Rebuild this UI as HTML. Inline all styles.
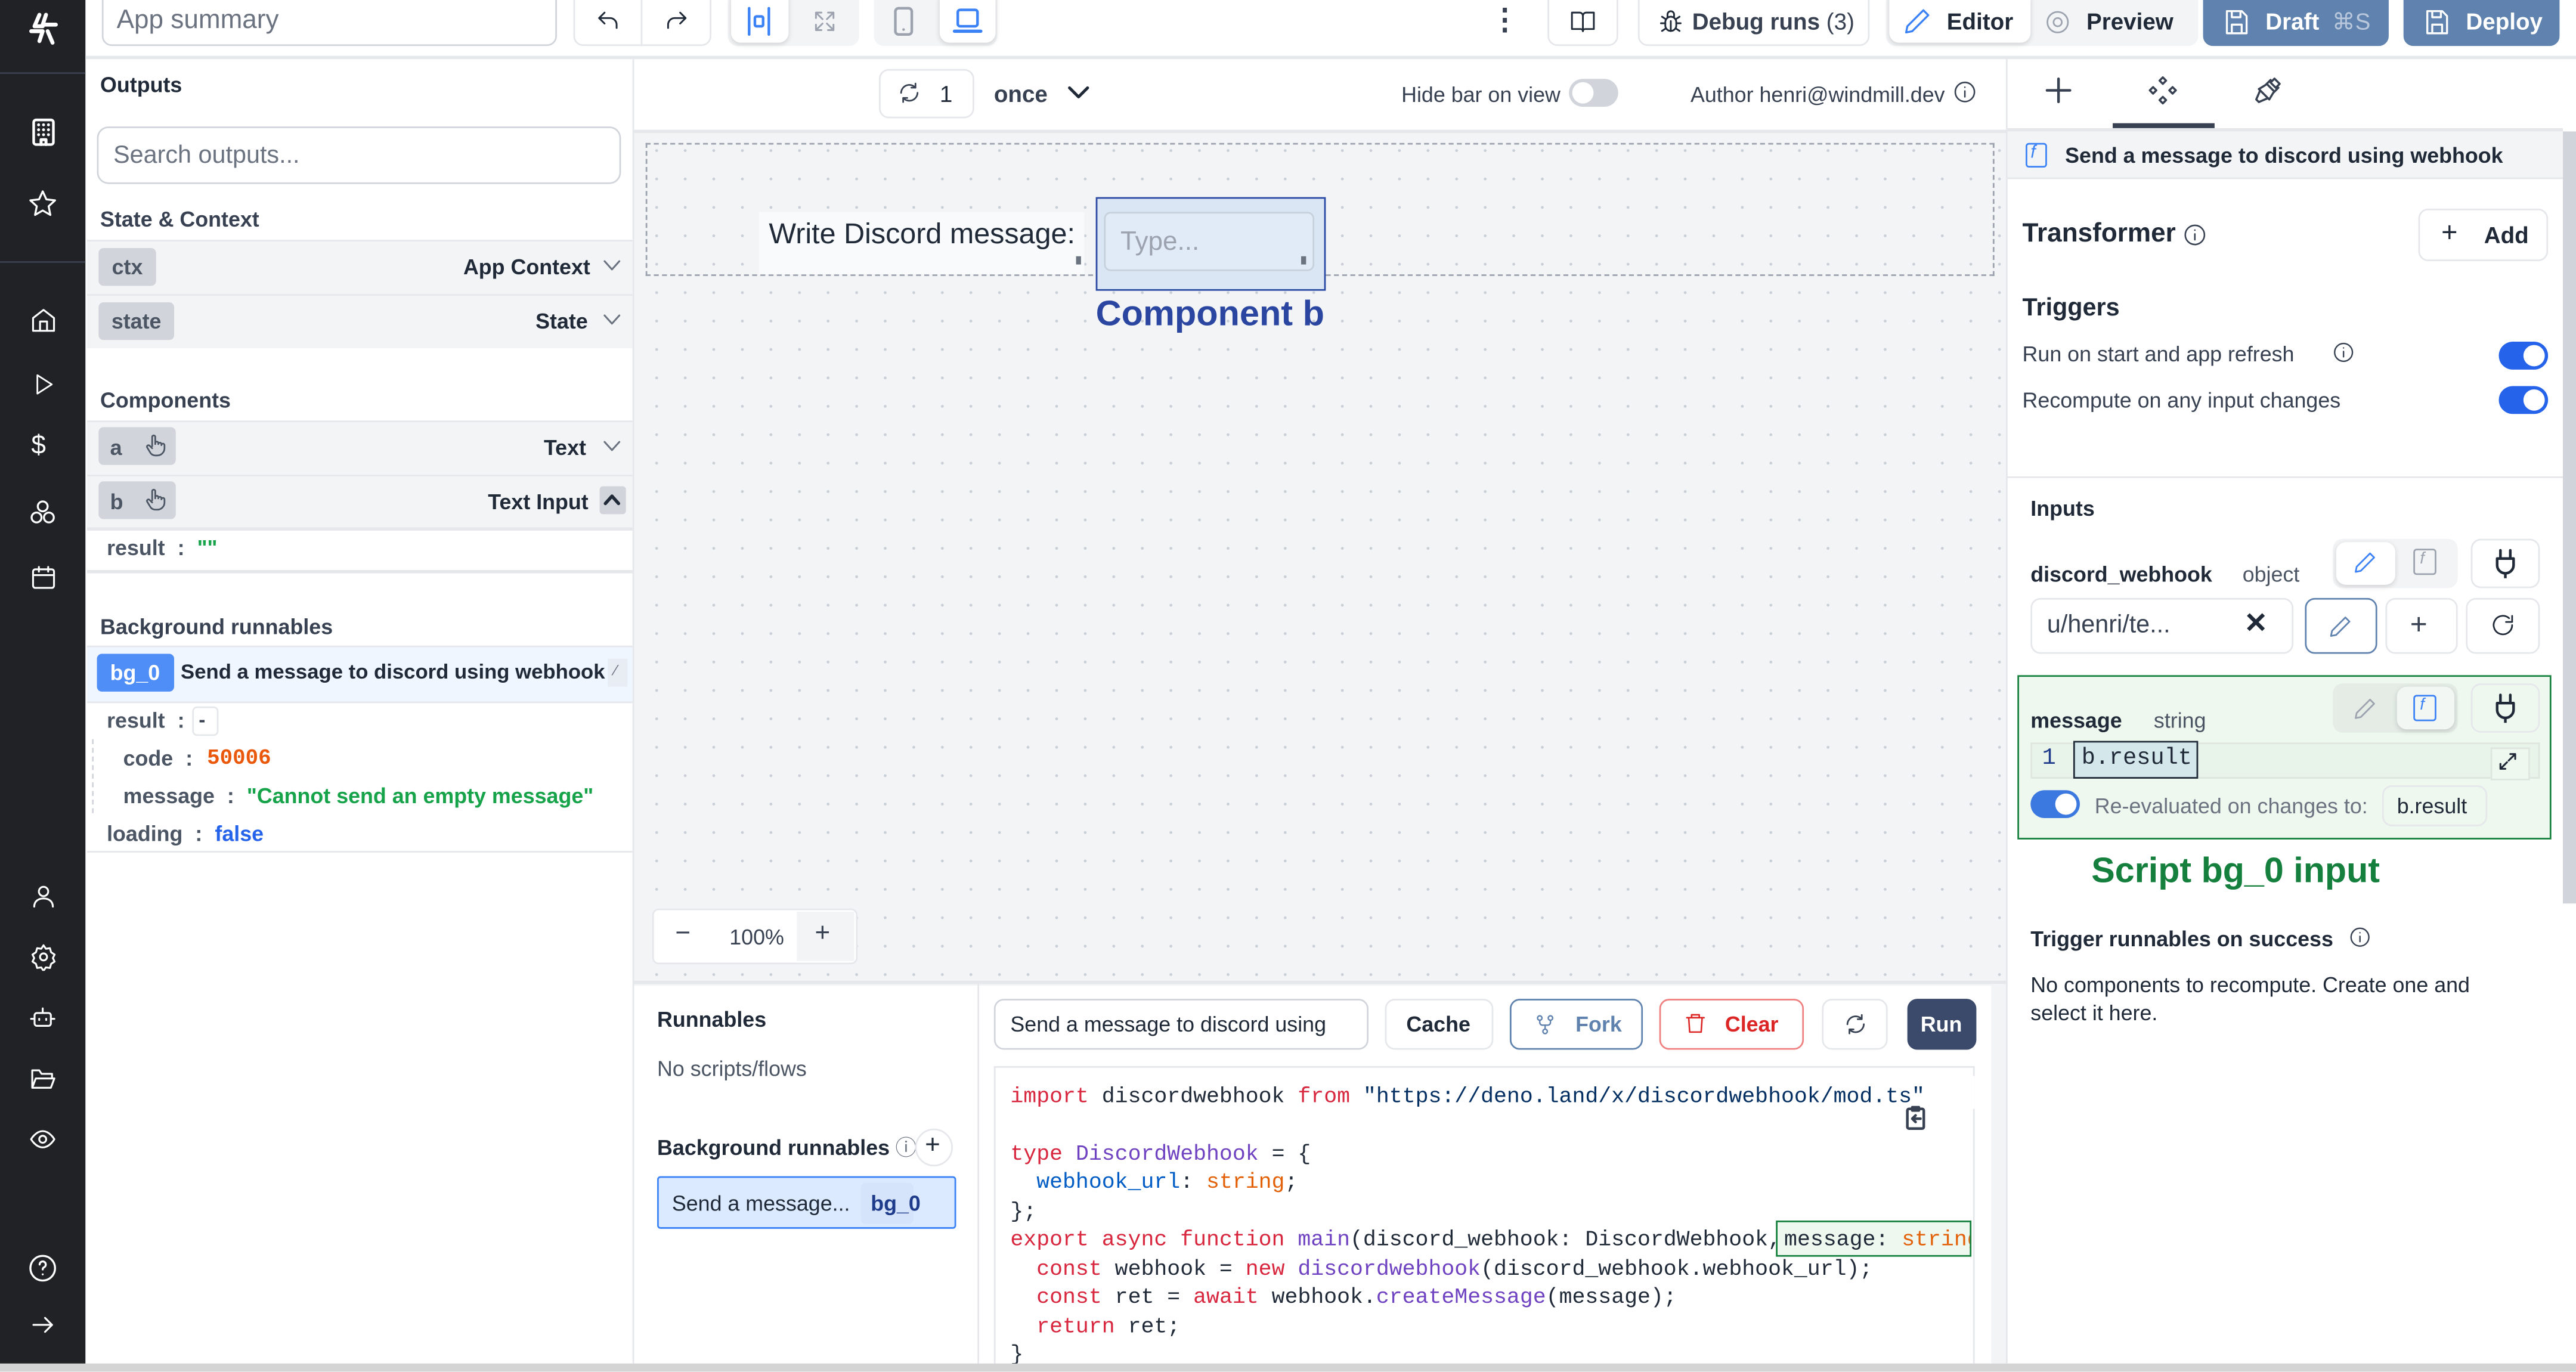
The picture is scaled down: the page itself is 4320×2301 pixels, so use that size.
<!DOCTYPE html>
<html><head><meta charset="utf-8">
<style>
html,body{margin:0;padding:0;width:4320px;height:2301px;overflow:hidden;background:#fff}
#r{position:absolute;left:0;top:0;width:1568px;height:835.2px;transform:scale(2.75510);transform-origin:0 0;font-family:"Liberation Sans",sans-serif;color:#1f2937;overflow:hidden;background:#fff}
.a{position:absolute}
.t{position:absolute;white-space:nowrap;line-height:1}
.b{font-weight:bold}
svg{position:absolute;fill:none;stroke:currentColor;stroke-width:1.6;stroke-linecap:round;stroke-linejoin:round}
.btn{position:absolute;border:1px solid #e5e7eb;border-radius:6px;background:#fff;box-sizing:border-box}
.row{position:absolute;left:53px;width:332px;background:#f3f4f6;border-top:1px solid #e5e7eb}
.pill{position:absolute;background:#d1d5db;border-radius:3px;color:#4b5563;font-weight:bold;font-size:13px}
.mono{font-family:"Liberation Mono",monospace}
.code{position:absolute;left:615px;font-family:"Liberation Mono",monospace;font-size:13.25px;white-space:pre;line-height:1;color:#1f2937}
.kw{color:#d7263d}.ty{color:#6f42c1}.st{color:#032f62}.or{color:#e36209}.bl{color:#005cc5}
.tg{position:absolute;width:30px;height:17px;border-radius:9px;background:#2563eb}
.tg::after{content:"";position:absolute;right:2px;top:2px;width:13px;height:13px;border-radius:50%;background:#fff}
</style></head><body><div id="r">

<!-- left sidebar -->
<div class="a" style="left:0;top:0;width:52px;height:835px;background:#202226"></div>
<div class="a" style="left:0;top:44px;width:52px;height:1px;background:#3a4050"></div>
<div class="a" style="left:0;top:159px;width:52px;height:1px;background:#3a4050"></div>
<svg style="left:15px;top:7px;color:#fff" width="22" height="22" viewBox="0 0 22 22"><path d="M9 2 L6 9 L11 9 M13 2 L11 8 L19 8 M4 12 L11 12 L9 18 M14 12 L17 19" stroke-width="2.4"/></svg>
<svg style="left:19px;top:72px;color:#fff" width="15" height="17" viewBox="0 0 15 17"><rect x="1.5" y="1" width="12" height="15" rx="1.5"/><path d="M4.5 4h0M7.5 4h0M10.5 4h0M4.5 7h0M7.5 7h0M10.5 7h0M4.5 10h0M7.5 10h0M10.5 10h0M6 16v-3h3v3" stroke-width="1.8"/></svg>
<svg style="left:17px;top:115px;color:#fff" width="18" height="18" viewBox="0 0 24 24"><path d="M12 2l3 6.5 7 .8-5.2 4.8 1.4 7-6.2-3.6-6.2 3.6 1.4-7L2 9.3l7-.8z"/></svg>
<svg style="left:18px;top:186px;color:#fff" width="17" height="18" viewBox="0 0 24 24"><path d="M3 10l9-7 9 7v11H3z M9 21v-8h6v8"/></svg>
<svg style="left:19px;top:226px;color:#fff" width="15" height="16" viewBox="0 0 24 24"><path d="M6 3l14 9-14 9z"/></svg>
<div class="t" style="left:19px;top:264px;color:#fff;font-size:16px">$</div>
<svg style="left:17px;top:303px;color:#fff" width="18" height="18" viewBox="0 0 24 24"><circle cx="12" cy="7" r="4"/><circle cx="7" cy="16" r="4"/><circle cx="17" cy="16" r="4"/></svg>
<svg style="left:18px;top:343px;color:#fff" width="17" height="17" viewBox="0 0 24 24"><rect x="3" y="5" width="18" height="16" rx="2"/><path d="M3 10h18M8 3v4M16 3v4"/></svg>
<svg style="left:18px;top:537px;color:#fff" width="17" height="17" viewBox="0 0 24 24"><circle cx="12" cy="8" r="4"/><path d="M4 21c0-5 4-7 8-7s8 2 8 7"/></svg>
<svg style="left:18px;top:574px;color:#fff" width="17" height="17" viewBox="0 0 24 24"><path d="M12 2l2 3 3.5-.5 1 3.5 3 2-1.5 3 1.5 3-3 2-1 3.5L14 21l-2 3-2-3-3.5.5-1-3.5-3-2 1.5-3L2.5 10l3-2 1-3.5L10 5z"/><circle cx="12" cy="12" r="3"/></svg>
<svg style="left:17px;top:611px;color:#fff" width="18" height="17" viewBox="0 0 24 24"><rect x="5" y="8" width="14" height="11" rx="2"/><path d="M12 8V4M2 13h3M19 13h3M9 13v1M15 13v1"/></svg>
<svg style="left:17px;top:648px;color:#fff" width="18" height="17" viewBox="0 0 24 24"><path d="M3 20V5h6l2 3h9v3M3 20l3-8h16l-3 8z"/></svg>
<svg style="left:17px;top:685px;color:#fff" width="18" height="17" viewBox="0 0 24 24"><path d="M2 12s4-7 10-7 10 7 10 7-4 7-10 7S2 12 2 12z"/><circle cx="12" cy="12" r="3"/></svg>
<svg style="left:17px;top:763px;color:#fff" width="18" height="18" viewBox="0 0 24 24"><circle cx="12" cy="12" r="10"/><path d="M9.5 9a2.5 2.5 0 1 1 3.5 2.3c-.7.4-1 1-1 1.7M12 17h0"/></svg>
<svg style="left:17px;top:798px;color:#fff" width="18" height="17" viewBox="0 0 24 24"><path d="M4 12h16M14 6l6 6-6 6"/></svg>

<!-- top bar -->
<div class="a" style="left:52px;top:34px;width:1516px;height:2px;background:#e5e7eb"></div>
<div class="btn" style="left:62px;top:-6px;width:277px;height:34px;border-color:#d1d5db"></div>
<div class="t" style="left:71px;top:5px;font-size:16px;color:#6b7280">App summary</div>
<div class="btn" style="left:349px;top:-6px;width:84px;height:34px"></div>
<div class="a" style="left:390px;top:0;width:1px;height:28px;background:#e5e7eb"></div>
<svg style="left:362px;top:5px;color:#1f2937" width="16" height="16" viewBox="0 0 24 24"><path d="M9 14L4 9l5-5M4 9h10a6 6 0 0 1 6 6v3"/></svg>
<svg style="left:404px;top:5px;color:#1f2937" width="16" height="16" viewBox="0 0 24 24"><path d="M15 14l5-5-5-5M20 9H10a6 6 0 0 0-6 6v3"/></svg>
<div class="a" style="left:443px;top:-6px;width:80px;height:34px;background:#f3f4f6;border-radius:6px"></div>
<div class="btn" style="left:445px;top:-6px;width:35px;height:32px;border:none;box-shadow:0 1px 3px rgba(0,0,0,.15)"></div>
<svg style="left:454px;top:4px;color:#3b82f6" width="16" height="18" viewBox="0 0 16 18"><path d="M2 1v16M14 1v16"/><rect x="5.5" y="6" width="5" height="6" rx="1"/></svg>
<svg style="left:494px;top:5px;color:#9ca3af" width="16" height="16" viewBox="0 0 24 24"><path d="M4 9V4h5M20 9V4h-5M4 15v5h5M20 15v5h-5M4 4l6 6M20 4l-6 6M4 20l6-6M20 20l-6-6"/></svg>
<div class="a" style="left:532px;top:-6px;width:75px;height:34px;background:#f3f4f6;border-radius:6px"></div>
<div class="btn" style="left:572px;top:-6px;width:34px;height:32px;border:none;box-shadow:0 1px 3px rgba(0,0,0,.15)"></div>
<svg style="left:543px;top:4px;color:#9ca3af" width="14" height="18" viewBox="0 0 14 18"><rect x="2" y="1" width="10" height="16" rx="2"/><path d="M7 14h0"/></svg>
<svg style="left:580px;top:4px;color:#3b82f6" width="18" height="18" viewBox="0 0 18 18"><rect x="3" y="2" width="12" height="10" rx="1.5"/><path d="M1 15h16" stroke-width="2"/></svg>
<div class="t b" style="left:907px;top:3px;font-size:18px;color:#374151">⋮</div>
<div class="btn" style="left:942px;top:-6px;width:43px;height:34px"></div>
<svg style="left:955px;top:5px;color:#1f2937" width="17" height="16" viewBox="0 0 24 24"><path d="M2 4h7a3 3 0 0 1 3 3v14a2 2 0 0 0-2-2H2zM22 4h-7a3 3 0 0 0-3 3v14a2 2 0 0 1 2-2h8z"/></svg>
<div class="btn" style="left:997px;top:-6px;width:141px;height:34px"></div>
<svg style="left:1009px;top:5px;color:#1f2937" width="16" height="17" viewBox="0 0 24 24"><rect x="7" y="7" width="10" height="13" rx="5"/><path d="M9 7V5a3 3 0 0 1 6 0v2M3 13h4M17 13h4M4 7l3 2M20 7l-3 2M4 20l3-2M20 20l-3-2M12 11v9"/></svg>
<div class="t b" style="left:1030px;top:6px;font-size:14px;color:#374151">Debug runs <span style="font-weight:normal">(3)</span></div>
<div class="a" style="left:1148px;top:-6px;width:190px;height:34px;background:#f3f4f6;border-radius:6px"></div>
<div class="btn" style="left:1150px;top:-6px;width:86px;height:32px;border:none;box-shadow:0 1px 3px rgba(0,0,0,.15)"></div>
<svg style="left:1158px;top:4px;color:#3b82f6" width="18" height="18" viewBox="0 0 24 24"><path d="M17 3l4 4L8 20l-5 1 1-5z"/></svg>
<div class="t b" style="left:1185px;top:6px;font-size:14px;color:#1f2937">Editor</div>
<svg style="left:1245px;top:6px;color:#9ca3af" width="15" height="15" viewBox="0 0 24 24"><circle cx="12" cy="12" r="10"/><circle cx="12" cy="12" r="4"/></svg>
<div class="t b" style="left:1270px;top:6px;font-size:14px;color:#1f2937">Preview</div>
<div class="a" style="left:1341px;top:-6px;width:113px;height:34px;background:#5f82ae;border-radius:6px"></div>
<svg style="left:1354px;top:5px;color:#fff" width="15" height="17" viewBox="0 0 20 22"><path d="M2 2h12l4 4v14H2z M6 2v5h7V2 M6 20v-7h8v7"/></svg>
<div class="t b" style="left:1379px;top:6px;font-size:14px;color:#fff">Draft <span style="color:#b8c7dc;font-weight:normal;margin-left:4px">⌘S</span></div>
<div class="a" style="left:1463px;top:-6px;width:95px;height:34px;background:#5f82ae;border-radius:6px"></div>
<svg style="left:1476px;top:5px;color:#fff" width="15" height="17" viewBox="0 0 20 22"><path d="M2 2h12l4 4v14H2z M6 2v5h7V2 M6 20v-7h8v7"/></svg>
<div class="t b" style="left:1501px;top:6px;font-size:14px;color:#fff">Deploy</div>

<!-- left panel -->
<div class="a" style="left:385px;top:36px;width:1px;height:794px;background:#e5e7eb"></div>
<div class="t b" style="left:61px;top:45px;font-size:13px;color:#1f2937">Outputs</div>
<div class="btn" style="left:59px;top:77px;width:319px;height:35px;border-color:#d1d5db;border-radius:7px"></div>
<div class="t" style="left:69px;top:87px;font-size:15px;color:#6b7280">Search outputs...</div>
<div class="t b" style="left:61px;top:127px;font-size:13px;color:#374151">State &amp; Context</div>
<div class="row" style="top:146px;height:32px"></div>
<div class="pill" style="left:60px;top:151px;width:35px;height:23px;line-height:23px;text-align:center">ctx</div>
<div class="t b" style="left:282px;top:156px;font-size:13px">App Context</div>
<svg style="left:367px;top:158px;color:#6b7280" width="11" height="8" viewBox="0 0 11 8"><path d="M1 1l4.5 5L10 1" stroke-width="1.1"/></svg>
<div class="row" style="top:179px;height:32px"></div>
<div class="pill" style="left:60px;top:184px;width:46px;height:23px;line-height:23px;text-align:center">state</div>
<div class="t b" style="left:326px;top:189px;font-size:13px">State</div>
<svg style="left:367px;top:191px;color:#6b7280" width="11" height="8" viewBox="0 0 11 8"><path d="M1 1l4.5 5L10 1" stroke-width="1.1"/></svg>
<div class="t b" style="left:61px;top:237px;font-size:13px;color:#374151">Components</div>
<div class="row" style="top:256px;height:32px"></div>
<div class="pill" style="left:60px;top:260px;width:47px;height:23px"></div>
<div class="t b" style="left:67px;top:266px;font-size:13px;color:#4b5563">a</div>
<svg style="left:87px;top:263px;color:#4b5563" width="15" height="16" viewBox="0 0 24 24" stroke-width="1.5"><path d="M9 13V4a1.5 1.5 0 0 1 3 0v7M12 10a1.5 1.5 0 0 1 3 0v1M15 11a1.5 1.5 0 0 1 3 0v1M18 12a1.5 1.5 0 0 1 3 0v3a7 7 0 0 1-7 7h-2a6 6 0 0 1-5-3l-3-5a1.5 1.5 0 0 1 2.5-1.5L9 15"/></svg>
<div class="t b" style="left:331px;top:266px;font-size:13px">Text</div>
<svg style="left:367px;top:268px;color:#6b7280" width="11" height="8" viewBox="0 0 11 8"><path d="M1 1l4.5 5L10 1" stroke-width="1.1"/></svg>
<div class="row" style="top:289px;height:32px"></div>
<div class="pill" style="left:60px;top:293px;width:47px;height:23px"></div>
<div class="t b" style="left:67px;top:299px;font-size:13px;color:#4b5563">b</div>
<svg style="left:87px;top:296px;color:#4b5563" width="15" height="16" viewBox="0 0 24 24" stroke-width="1.5"><path d="M9 13V4a1.5 1.5 0 0 1 3 0v7M12 10a1.5 1.5 0 0 1 3 0v1M15 11a1.5 1.5 0 0 1 3 0v1M18 12a1.5 1.5 0 0 1 3 0v3a7 7 0 0 1-7 7h-2a6 6 0 0 1-5-3l-3-5a1.5 1.5 0 0 1 2.5-1.5L9 15"/></svg>
<div class="t b" style="left:297px;top:299px;font-size:13px">Text Input</div>
<div class="a" style="left:365px;top:296px;width:16px;height:17px;background:#d1d5db;border-radius:2px"></div>
<svg style="left:367px;top:300px;color:#1f2937" width="11" height="8" viewBox="0 0 11 8"><path d="M1.5 6.5l4-4.5 4 4.5" stroke-width="2"/></svg>
<div class="a" style="left:53px;top:321px;width:332px;height:2px;background:#e5e7eb"></div>
<div class="t b" style="left:65px;top:327px;font-size:13px;color:#4b5563">result <span style="margin-left:4px">:</span> <span style="color:#16a34a;margin-left:4px">""</span></div>
<div class="a" style="left:53px;top:347px;width:332px;height:2px;background:#e5e7eb"></div>
<div class="t b" style="left:61px;top:375px;font-size:13px;color:#374151">Background runnables</div>
<div class="a" style="left:53px;top:393px;width:332px;height:33px;background:#eff6ff;border-top:1px solid #e5e7eb;border-bottom:1px solid #e5e7eb"></div>
<div class="a" style="left:59px;top:398px;width:47px;height:23px;background:#4f8ef7;border-radius:3px"></div>
<div class="t b" style="left:67px;top:403px;font-size:13px;color:#fff">bg_0</div>
<div class="t b" style="left:110px;top:403px;font-size:12.6px">Send a message to discord using webhook</div>
<div class="a" style="left:370px;top:401px;width:12px;height:17px;background:#e8edf3"></div>
<div class="t" style="left:374px;top:404px;font-size:9px;color:#6b7280">⁄</div>
<div class="t b" style="left:65px;top:432px;font-size:13px;color:#4b5563">result <span style="margin-left:4px">:</span></div>
<div class="btn" style="left:117px;top:430px;width:16px;height:18px;border-radius:3px"></div>
<div class="t b" style="left:121px;top:432px;font-size:12px;color:#374151">-</div>
<div class="a" style="left:56px;top:450px;width:0;height:45px;border-left:1px dashed #d1d5db"></div>
<div class="t b" style="left:75px;top:455px;font-size:13px;color:#4b5563">code <span style="margin-left:4px">:</span></div>
<div class="t b mono" style="left:126px;top:455px;font-size:13px;color:#ea580c">50006</div>
<div class="t b" style="left:75px;top:478px;font-size:13px;color:#4b5563">message <span style="margin-left:4px">:</span> <span style="color:#16a34a;margin-left:4px">"Cannot send an empty message"</span></div>
<div class="t b" style="left:65px;top:501px;font-size:13px;color:#4b5563">loading <span style="margin-left:4px">:</span> <span style="color:#2563eb;margin-left:4px">false</span></div>
<div class="a" style="left:53px;top:518px;width:332px;height:1px;background:#e5e7eb"></div>

<!-- center -->
<div class="a" style="left:386px;top:79px;width:836px;height:519px;background-color:#f3f4f6;background-image:radial-gradient(circle,#c8ced6 0.7px,transparent 1px);background-size:17.4px 17.3px;background-position:5px 2px;border-top:2px solid #e5e7eb"></div>
<div class="btn" style="left:535px;top:42px;width:58px;height:30px"></div>
<svg style="left:546px;top:49px;color:#374151" width="15" height="15" viewBox="0 0 24 24"><path d="M20 12a8 8 0 0 1-14 5M4 12a8 8 0 0 1 14-5M18 3v4h-4M6 21v-4h4"/></svg>
<div class="t" style="left:572px;top:50px;font-size:14px;color:#1f2937">1</div>
<div class="t b" style="left:605px;top:50px;font-size:14px;color:#374151">once</div>
<svg style="left:650px;top:52px;color:#1f2937" width="13" height="9" viewBox="0 0 13 9"><path d="M1 1.5l5.5 5.5L12 1.5" stroke-width="1.8"/></svg>
<div class="t" style="left:853px;top:51px;font-size:13px;color:#374151">Hide bar on view</div>
<div class="a" style="left:955px;top:48px;width:30px;height:17px;border-radius:9px;background:#d1d5db"></div>
<div class="a" style="left:957px;top:50px;width:13px;height:13px;border-radius:50%;background:#fff"></div>
<div class="t" style="left:1029px;top:51px;font-size:13px;color:#374151">Author henri@windmill.dev</div>
<svg style="left:1189px;top:49px;color:#374151" width="14" height="14" viewBox="0 0 24 24"><circle cx="12" cy="12" r="10"/><path d="M12 11v6M12 7h0"/></svg>
<div class="a" style="left:393px;top:87px;width:821px;height:81px;border:1px dashed #9ca3af;box-sizing:border-box"></div>
<div class="a" style="left:462px;top:129px;width:198px;height:38px;background:#f9fafb"></div>
<div class="t" style="left:468px;top:134px;font-size:17.6px;color:#1f2937">Write Discord message:</div>
<div class="a" style="left:655px;top:156px;width:3px;height:5px;background:#6b7280"></div>
<div class="a" style="left:667px;top:120px;width:140px;height:57px;background:#dbe6f4;border:1.5px solid #2a4aa3;box-sizing:border-box"></div>
<div class="a" style="left:672px;top:129px;width:128px;height:36px;border:1.5px solid #c7d1de;border-radius:4px;background:#e1ebf7;box-sizing:border-box"></div>
<div class="t" style="left:682px;top:140px;font-size:16px;color:#9ca3af">Type...</div>
<div class="a" style="left:792px;top:156px;width:3px;height:5px;background:#6b7280"></div>
<div class="t b" style="left:667px;top:180px;font-size:21.6px;color:#2a46a0">Component b</div>
<div class="btn" style="left:397px;top:553px;width:125px;height:34px;border-radius:4px"></div>
<div class="t" style="left:411px;top:561px;font-size:16px;color:#374151">−</div>
<div class="t" style="left:444px;top:564px;font-size:13px;color:#374151">100%</div>
<div class="a" style="left:485px;top:555px;width:35px;height:30px;background:#f3f4f6"></div>
<div class="t" style="left:496px;top:561px;font-size:16px;color:#374151">+</div>

<!-- bottom panel -->
<div class="a" style="left:386px;top:597px;width:836px;height:2px;background:#e5e7eb"></div>
<div class="a" style="left:595px;top:599px;width:1px;height:231px;background:#e5e7eb"></div>
<div class="a" style="left:1212px;top:599px;width:10px;height:231px;background:#f3f4f6"></div>
<div class="t b" style="left:400px;top:614px;font-size:13px">Runnables</div>
<div class="t" style="left:400px;top:644px;font-size:13px;color:#4b5563">No scripts/flows</div>
<div class="t b" style="left:400px;top:692px;font-size:13px">Background runnables</div>
<div class="t" style="left:545px;top:692px;font-size:13px;color:#6b7280">ⓘ</div>
<div class="a" style="left:557px;top:687px;width:23px;height:23px;border-radius:50%;background:#fff;border:1px solid #e5e7eb;box-sizing:border-box"></div>
<div class="t" style="left:563px;top:690px;font-size:16px;color:#1f2937">+</div>
<div class="a" style="left:400px;top:716px;width:182px;height:32px;background:#dbeafe;border:1.5px solid #3b82f6;border-radius:2px;box-sizing:border-box"></div>
<div class="t" style="left:409px;top:726px;font-size:13px;color:#1f2937">Send a message...</div>
<div class="a" style="left:524px;top:720px;width:32px;height:25px;background:#d5e3fb;border-radius:3px"></div>
<div class="t b" style="left:530px;top:726px;font-size:13px;color:#1e3a8a">bg_0</div>
<div class="btn" style="left:605px;top:608px;width:228px;height:31px;border-color:#d1d5db"></div>
<div class="t" style="left:615px;top:617px;font-size:13px;color:#1f2937">Send a message to discord using</div>
<div class="btn" style="left:843px;top:608px;width:66px;height:31px"></div>
<div class="t b" style="left:856px;top:617px;font-size:13px">Cache</div>
<div class="btn" style="left:919px;top:608px;width:81px;height:31px;border-color:#5f82ae"></div>
<svg style="left:934px;top:616px;color:#5f82ae" width="13" height="15" viewBox="0 0 24 24"><circle cx="6" cy="5" r="2.5"/><circle cx="18" cy="5" r="2.5"/><circle cx="12" cy="20" r="2.5"/><path d="M6 8v2a3 3 0 0 0 3 3h6a3 3 0 0 0 3-3V8M12 13v4"/></svg>
<div class="t b" style="left:959px;top:617px;font-size:13px;color:#5f82ae">Fork</div>
<div class="btn" style="left:1010px;top:608px;width:88px;height:31px;border-color:#f08080"></div>
<svg style="left:1025px;top:615px;color:#dc2626" width="14" height="16" viewBox="0 0 24 24"><path d="M3 6h18M8 6V3h8v3M5 6l1 15h12l1-15"/></svg>
<div class="t b" style="left:1050px;top:617px;font-size:13px;color:#dc2626">Clear</div>
<div class="btn" style="left:1109px;top:608px;width:40px;height:31px"></div>
<svg style="left:1122px;top:616px;color:#374151" width="15" height="15" viewBox="0 0 24 24"><path d="M20 12a8 8 0 0 1-14 5M4 12a8 8 0 0 1 14-5M18 3v4h-4M6 21v-4h4"/></svg>
<div class="a" style="left:1161px;top:608px;width:42px;height:31px;background:#3b4a6b;border-radius:6px"></div>
<div class="t b" style="left:1169px;top:617px;font-size:13px;color:#fff">Run</div>
<div class="a" style="left:605px;top:649px;width:597px;height:181px;border:1px solid #e5e7eb;border-bottom:none;box-sizing:border-box"></div>
<div class="code" style="top:661px"><span class="kw">import</span> discordwebhook <span class="kw">from</span> <span class="st">"https://deno.land/x/discordwebhook/mod.ts"</span>;</div>
<div class="a" style="left:1174px;top:655px;width:28px;height:20px;background:#fff"></div>
<svg style="left:1160px;top:673px;color:#374151" width="12" height="15" viewBox="0 0 12 15"><rect x="1" y="2" width="10" height="12" rx="1"/><path d="M4 1h4v2H4zM9 8H4l2-2M4 8l2 2"/></svg>
<div class="code" style="top:696px"><span class="kw">type</span> <span class="ty">DiscordWebhook</span> = {</div>
<div class="code" style="top:713px">  <span class="bl">webhook_url</span>: <span class="or">string</span>;</div>
<div class="code" style="top:731px">};</div>
<div class="code" style="top:748px"><span class="kw">export async function</span> <span class="ty">main</span>(discord_webhook: DiscordWebhook, </div>
<div class="a" style="left:1081px;top:743px;width:119px;height:22px;border:1.5px solid #15803d;background:#eef8ef;box-sizing:border-box;overflow:hidden"><div class="code" style="left:4px;top:4px">message: <span class="or">string</span></div></div>
<div class="code" style="top:766px">  <span class="kw">const</span> webhook = <span class="kw">new</span> <span class="ty">discordwebhook</span>(discord_webhook.webhook_url);</div>
<div class="code" style="top:783px">  <span class="kw">const</span> ret = <span class="kw">await</span> webhook.<span class="ty">createMessage</span>(message);</div>
<div class="code" style="top:801px">  <span class="kw">return</span> ret;</div>
<div class="code" style="top:818px">}</div>
<div class="a" style="left:0;top:830px;width:1568px;height:6px;background:#d4d4d4"></div>

<!-- right panel -->
<div class="a" style="left:1221px;top:36px;width:1px;height:794px;background:#e5e7eb"></div>
<div class="a" style="left:1560px;top:80px;width:8px;height:470px;background:#d1d5db"></div>
<svg style="left:1245px;top:47px;color:#374151" width="16" height="16" viewBox="0 0 16 16"><path d="M8 1v14M1 8h14"/></svg>
<svg style="left:1307px;top:45px;color:#374151" width="19" height="20" viewBox="0 0 24 24"><path d="M12 2l2.5 2.5L12 7 9.5 4.5zM12 17l2.5 2.5L12 22l-2.5-2.5zM4.5 9.5L7 12l-2.5 2.5L2 12zM19.5 9.5L22 12l-2.5 2.5L17 12z"/></svg>
<svg style="left:1371px;top:45px;color:#374151" width="19" height="20" viewBox="0 0 24 24"><path d="M14 4l-4 4-5 3 8 8 3-5 4-4M11 7l6 6M17 3l4 4-3 3-4-4zM6 12l-3 7 2 2 7-3"/></svg>
<div class="a" style="left:1286px;top:75px;width:62px;height:3px;background:#374151"></div>
<div class="a" style="left:1222px;top:78px;width:338px;height:2px;background:#e5e7eb"></div>
<div class="a" style="left:1222px;top:80px;width:338px;height:28px;background:#f3f4f6;border-bottom:1px solid #e5e7eb"></div>
<div class="a" style="left:1233px;top:87px;width:13px;height:15px;border:1.3px solid #3b82f6;border-radius:2px;box-sizing:border-box"></div>
<div class="t" style="left:1236px;top:88px;font-size:11px;color:#3b82f6;font-style:italic">f</div>
<div class="t b" style="left:1257px;top:88px;font-size:13px">Send a message to discord using webhook</div>
<div class="t b" style="left:1231px;top:135px;font-size:16px">Transformer</div>
<svg style="left:1329px;top:136px;color:#374151" width="14" height="14" viewBox="0 0 24 24"><circle cx="12" cy="12" r="10"/><path d="M12 11v6M12 7h0"/></svg>
<div class="btn" style="left:1472px;top:127px;width:79px;height:32px"></div>
<div class="t" style="left:1486px;top:133px;font-size:17px">+</div>
<div class="t b" style="left:1512px;top:136px;font-size:14px">Add</div>
<div class="t b" style="left:1231px;top:180px;font-size:15px">Triggers</div>
<div class="t" style="left:1231px;top:209px;font-size:13px;color:#374151">Run on start and app refresh</div>
<svg style="left:1420px;top:208px;color:#374151" width="13" height="13" viewBox="0 0 24 24"><circle cx="12" cy="12" r="10"/><path d="M12 11v6M12 7h0"/></svg>
<div class="tg" style="left:1521px;top:208px"></div>
<div class="t" style="left:1231px;top:237px;font-size:13px;color:#374151">Recompute on any input changes</div>
<div class="tg" style="left:1521px;top:235px"></div>
<div class="a" style="left:1222px;top:290px;width:338px;height:1px;background:#e5e7eb"></div>
<div class="t b" style="left:1236px;top:303px;font-size:13px">Inputs</div>
<div class="t b" style="left:1236px;top:343px;font-size:13px">discord_webhook</div>
<div class="t" style="left:1365px;top:343px;font-size:13px;color:#4b5563">object</div>
<div class="a" style="left:1420px;top:328px;width:76px;height:30px;background:#f3f4f6;border-radius:6px"></div>
<div class="btn" style="left:1422px;top:330px;width:36px;height:26px;border:none;box-shadow:0 1px 3px rgba(0,0,0,.15)"></div>
<svg style="left:1432px;top:334px;color:#3b82f6" width="15" height="17" viewBox="0 0 24 24"><path d="M17 3l4 4L8 20l-5 1 1-5z"/></svg>
<div class="a" style="left:1469px;top:334px;width:14px;height:16px;border:1.2px solid #9ca3af;border-radius:2px;box-sizing:border-box"></div>
<div class="t" style="left:1473px;top:336px;font-size:10px;color:#9ca3af;font-style:italic">f</div>
<div class="btn" style="left:1504px;top:328px;width:42px;height:30px"></div>
<svg style="left:1518px;top:334px;color:#1f2937" width="14" height="18" viewBox="0 0 14 18"><path d="M4 1v5M10 1v5M2 6h10v4a5 5 0 0 1-10 0zM7 15v3"/></svg>
<div class="btn" style="left:1236px;top:364px;width:160px;height:34px"></div>
<div class="t" style="left:1246px;top:373px;font-size:15px;color:#374151">u/henri/te...</div>
<div class="t b" style="left:1366px;top:371px;font-size:17px;color:#1f2937">✕</div>
<div class="btn" style="left:1403px;top:364px;width:44px;height:34px;border-color:#5f82ae"></div>
<svg style="left:1417px;top:373px;color:#5f82ae" width="15" height="17" viewBox="0 0 24 24"><path d="M17 3l4 4L8 20l-5 1 1-5z"/></svg>
<div class="btn" style="left:1452px;top:364px;width:44px;height:34px"></div>
<div class="t" style="left:1467px;top:371px;font-size:18px;color:#374151">+</div>
<div class="btn" style="left:1501px;top:364px;width:45px;height:34px"></div>
<svg style="left:1516px;top:373px;color:#1f2937" width="15" height="15" viewBox="0 0 24 24"><path d="M21 12a9 9 0 1 1-3-6.7M21 3v6h-6"/></svg>
<div class="a" style="left:1228px;top:411px;width:325px;height:100px;border:1.5px solid #15803d;background:#eef8ef;box-sizing:border-box"></div>
<div class="t b" style="left:1236px;top:432px;font-size:13px">message</div>
<div class="t" style="left:1311px;top:432px;font-size:13px;color:#4b5563">string</div>
<div class="a" style="left:1420px;top:416px;width:76px;height:30px;background:#e5ece6;border-radius:6px"></div>
<svg style="left:1432px;top:423px;color:#9ca3af" width="15" height="17" viewBox="0 0 24 24"><path d="M17 3l4 4L8 20l-5 1 1-5z"/></svg>
<div class="btn" style="left:1459px;top:418px;width:35px;height:26px;border:none;box-shadow:0 1px 3px rgba(0,0,0,.15);background:#f3f7f3"></div>
<div class="a" style="left:1469px;top:423px;width:14px;height:16px;border:1.3px solid #3b82f6;border-radius:2px;box-sizing:border-box"></div>
<div class="t" style="left:1473px;top:425px;font-size:10px;color:#3b82f6;font-style:italic">f</div>
<div class="btn" style="left:1504px;top:416px;width:42px;height:30px;background:#eef8ef"></div>
<svg style="left:1518px;top:422px;color:#1f2937" width="14" height="18" viewBox="0 0 14 18"><path d="M4 1v5M10 1v5M2 6h10v4a5 5 0 0 1-10 0zM7 15v3"/></svg>
<div class="a" style="left:1236px;top:452px;width:310px;height:22px;border:1px solid #dfe5df;box-sizing:border-box;background:#e8f3e9"></div>
<div class="t mono" style="left:1243px;top:455px;font-size:14px;color:#1e3a8a">1</div>
<div class="a" style="left:1262px;top:451px;width:76px;height:23px;border:1.5px solid #1f2937;background:#d4e7ea;box-sizing:border-box"></div>
<div class="t mono" style="left:1267px;top:455px;font-size:14px;color:#1f2937">b.result</div>
<div class="a" style="left:1516px;top:455px;width:22px;height:18px;border:1px solid #dfe5df;background:#eef8ef"></div>
<svg style="left:1520px;top:457px;color:#1f2937" width="13" height="13" viewBox="0 0 13 13"><path d="M2 11l4-4M2 8v3h3M11 2L7 6M8 2h3v3" stroke-width="1.1"/></svg>
<div class="a" style="left:1236px;top:481px;width:30px;height:17px;border-radius:9px;background:#3b78e0"></div>
<div class="a" style="left:1251px;top:483px;width:13px;height:13px;border-radius:50%;background:#fff"></div>
<div class="t" style="left:1275px;top:484px;font-size:13px;color:#6b7280">Re-evaluated on changes to:</div>
<div class="btn" style="left:1450px;top:478px;width:64px;height:25px;background:#eef8ef"></div>
<div class="t" style="left:1459px;top:484px;font-size:13px;color:#1f2937">b.result</div>
<div class="t b" style="left:1273px;top:520px;font-size:21.5px;color:#15803d">Script bg_0 input</div>
<div class="t b" style="left:1236px;top:565px;font-size:13px">Trigger runnables on success</div>
<svg style="left:1430px;top:564px;color:#374151" width="13" height="13" viewBox="0 0 24 24"><circle cx="12" cy="12" r="10"/><path d="M12 11v6M12 7h0"/></svg>
<div class="t" style="left:1236px;top:591px;font-size:13px;color:#1f2937;line-height:17px">No components to recompute. Create one and<br>select it here.</div>

</div></body></html>
